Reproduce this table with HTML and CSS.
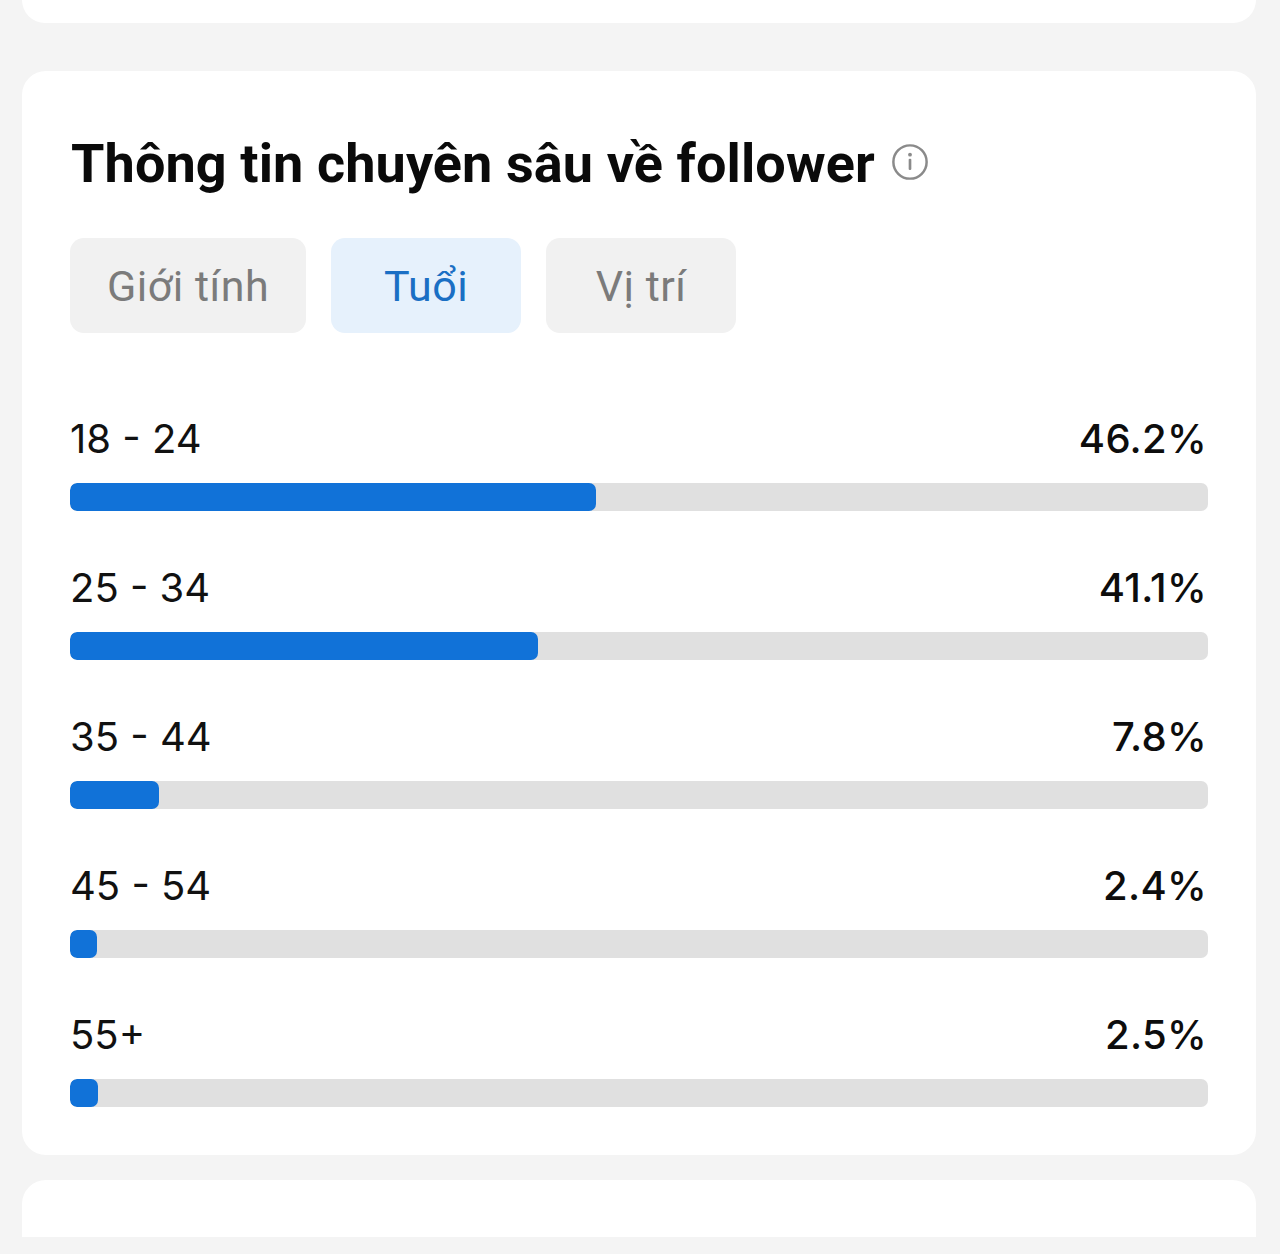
FILE: index.html
```html
<!DOCTYPE html>
<html lang="vi">
<head>
<meta charset="utf-8">
<title>Thông tin chuyên sâu về follower</title>
<link rel="stylesheet" href="styles.css">
</head>
<body>
<div class="page">
  <div class="card card-top"></div>
  <section class="card card-main">
    <h2 class="title">Thông tin chuyên sâu về follower
      <svg class="info" viewBox="0 0 40 40" width="38" height="38" aria-hidden="true">
        <circle cx="20" cy="20" r="17.5" fill="none" stroke="#8a8a8a" stroke-width="2.6"/>
        <circle cx="20" cy="12.3" r="2" fill="#8a8a8a"/>
        <rect x="18.6" y="16.5" width="2.8" height="12" rx="1.2" fill="#8a8a8a"/>
      </svg>
    </h2>
    <div class="tabs">
      <div class="tab">Giới tính</div>
      <div class="tab active">Tuổi</div>
      <div class="tab">Vị trí</div>
    </div>
    <div class="rows">
      <div class="row">
        <div class="row-head"><span class="label">18 - 24</span><span class="pct">46.2%</span></div>
        <div class="track"><div class="fill" style="width:46.2%"></div></div>
      </div>
      <div class="row">
        <div class="row-head"><span class="label">25 - 34</span><span class="pct">41.1%</span></div>
        <div class="track"><div class="fill" style="width:41.1%"></div></div>
      </div>
      <div class="row">
        <div class="row-head"><span class="label">35 - 44</span><span class="pct">7.8%</span></div>
        <div class="track"><div class="fill" style="width:7.8%"></div></div>
      </div>
      <div class="row">
        <div class="row-head"><span class="label">45 - 54</span><span class="pct">2.4%</span></div>
        <div class="track"><div class="fill" style="width:2.4%"></div></div>
      </div>
      <div class="row">
        <div class="row-head"><span class="label">55+</span><span class="pct">2.5%</span></div>
        <div class="track"><div class="fill" style="width:2.5%"></div></div>
      </div>
    </div>
  </section>
  <div class="card card-bottom"></div>
</div>
</body>
</html>
```

FILE: styles.css
```css
* { box-sizing: border-box; }
html, body {
  margin: 0;
  padding: 0;
  background: #f4f4f4;
  font-family: Roboto, "Noto Sans", "Liberation Sans", sans-serif;
  color: #111;
}
.page {
  display: flex;
  flex-direction: column;
  padding: 0 24px 17px 22px;
}
.card {
  background: #fff;
  border-radius: 24px;
}
.card-top {
  height: 23px;
  border-radius: 0 0 24px 24px;
  margin-bottom: 48px;
}
.card-main {
  padding: 61px 48px 48px 48px;
}
.card-bottom {
  margin-top: 25px;
  height: 57px;
  border-radius: 24px 24px 0 0;
}
.title {
  margin: 0;
  font-size: 54px;
  line-height: 64px;
  font-weight: 700;
  display: flex;
  align-items: center;
  gap: 16px;
  padding-left: 1px;
  letter-spacing: 0.1px;
  color: #0a0a0a;
}
.info { flex: none; margin-top: -4px; }
.tabs {
  display: flex;
  gap: 25px;
  margin-top: 42px;
}
.tab {
  height: 95px;
  min-width: 190px;
  padding: 0 37px;
  border-radius: 14px;
  background: #f1f1f1;
  color: #7b7b7b;
  font-size: 43px;
  letter-spacing: 0.5px;
  display: flex;
  align-items: center;
  justify-content: center;
}
.tab.active {
  background: #e6f1fc;
  color: #1a6fc4;
}
.rows {
  margin-top: 82px;
  display: flex;
  flex-direction: column;
  gap: 53px;
}
.row-head {
  display: flex;
  justify-content: space-between;
  align-items: baseline;
  font-family: Inter, Roboto, "Liberation Sans", sans-serif;
  font-size: 40px;
  line-height: 48px;
  padding-right: 1px;
}
.label { color: #111; padding-left: 0; }
.pct { font-weight: 500; color: #0d0d0d; letter-spacing: 0.3px; }
.track {
  margin-top: 20px;
  height: 28px;
  border-radius: 7px;
  background: #e0e0e0;
  overflow: hidden;
}
.fill {
  height: 100%;
  background: #1172d8;
  border-radius: 7px;
}
```
